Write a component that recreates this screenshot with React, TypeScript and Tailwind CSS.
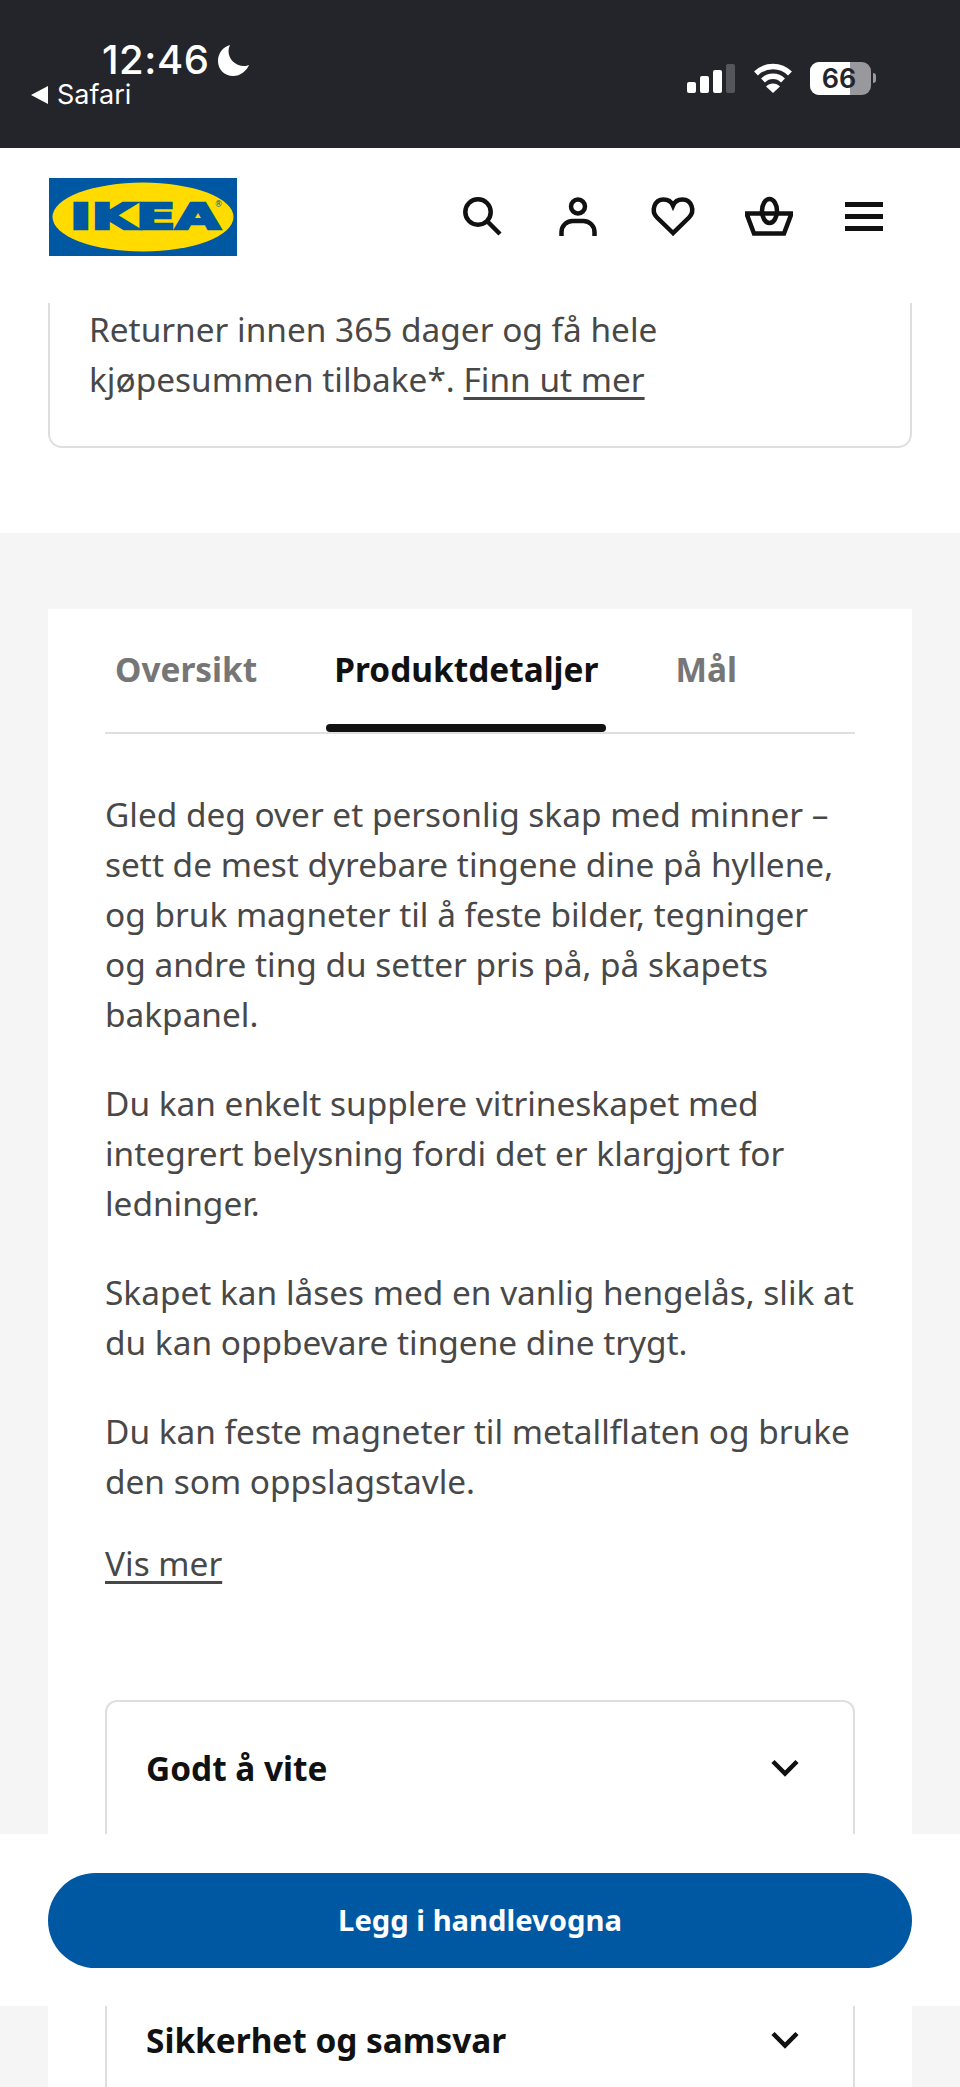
const bodyParagraphs = [
  "Gled deg over et personlig skap med minner – sett de mest dyrebare tingene dine på hyllene, og bruk magneter til å feste bilder, tegninger og andre ting du setter pris på, på skapets bakpanel.",
  "Du kan enkelt supplere vitrineskapet med integrert belysning fordi det er klargjort for ledninger.",
  "Skapet kan låses med en vanlig hengelås, slik at du kan oppbevare tingene dine trygt.",
  "Du kan feste magneter til metallflaten og bruke den som oppslagstavle.",
];

function StatusBar() {
  return (
    <div className="flex h-[148px] justify-between bg-[#24252b] pl-[31px] pr-[84px] pt-[40px] font-['Inter',sans-serif] text-white">
      <div>
        <div className="flex h-[40px] items-center pl-[71px]">
          <span className="text-[40px] font-medium leading-[40px] tracking-[0.5px]">12:46</span>
          <svg className="ml-[9px]" width="32" height="32" viewBox="0 0 32 32" fill="#fff">
            <path d="M12 1C5 3 0 9 0 17c0 8.500 6.500 15 15 15 7.500 0 13.500-5 16-11-1 .5-3 1-5 1-9 0-15.500-7-15.500-15 0-2 .5-4 1.500-6z" />
          </svg>
        </div>
        <div className="flex h-[30px] items-center">
          <svg width="18" height="18" viewBox="0 0 18 18" fill="#fff">
            <path d="M0 9 17 0v18z" />
          </svg>
          <span className="ml-[8px] text-[27px] leading-[30px]">Safari</span>
        </div>
      </div>
      <div className="flex h-[40px] items-center pt-[36px]">
        <div className="flex items-end gap-[4px]">
          <div className="h-[11px] w-[9px] rounded-[2px] bg-white" />
          <div className="h-[17px] w-[9px] rounded-[2px] bg-white" />
          <div className="h-[23px] w-[9px] rounded-[2px] bg-white" />
          <div className="h-[29px] w-[9px] rounded-[2px] bg-[#55565b]" />
        </div>
        <svg className="ml-[18px]" width="40" height="30" viewBox="0 0 40 30" fill="none" stroke="#fff">
          <path d="M3 10.500A24 24 0 0 1 37 10.500" strokeWidth="5.500" />
          <path d="M10 17.500A14 14 0 0 1 30 17.500" strokeWidth="5.500" />
          <path d="M20 30 13 23.500A9.500 9.500 0 0 1 27 23.500z" fill="#fff" stroke="none" />
        </svg>
        <div className="ml-[17px] flex h-[33px] w-[61px] overflow-hidden rounded-[9px] bg-[#98989d]">
          <div className="flex h-full w-[40px] bg-white" />
          <span className="-ml-[40px] w-[61px] pr-[3px] text-center text-[27px] font-semibold leading-[33px] text-[#24252b]">66</span>
        </div>
        <div className="ml-[2px] h-[10px] w-[3px] rounded-r-full bg-[#98989d]" />
      </div>
    </div>
  );
}

function IkeaLogo() {
  return (
    <svg width="188" height="78" viewBox="0 0 188 78">
      <rect width="188" height="78" fill="#0058a3" />
      <ellipse cx="94" cy="39" rx="90.500" ry="34.500" fill="#ffdb00" />
      <text
        x="21"
        y="51"
        fontFamily="'DejaVu Sans', sans-serif"
        fontWeight="700"
        fontSize="36"
        fill="#0058a3"
        stroke="#0058a3"
        strokeWidth="2.500"
        textLength="150"
        lengthAdjust="spacingAndGlyphs"
      >
        IKEA
      </text>
      <text x="165.500" y="29" fontFamily="'DejaVu Sans', sans-serif" fontSize="8" fill="#0058a3">®</text>
    </svg>
  );
}

function NavIcons() {
  return (
    <div className="mt-[14px] flex gap-[47.500px]">
      <svg width="48" height="48" viewBox="0 0 48 48" fill="none" stroke="#111" strokeWidth="4.500">
        <circle cx="20" cy="20" r="12.700" />
        <path d="M29 29 42 42" />
      </svg>
      <svg width="48" height="48" viewBox="0 0 48 48" fill="none" stroke="#111" strokeWidth="4.500">
        <circle cx="24" cy="14.500" r="7" />
        <path d="M7.500 44v-4a11 11 0 0 1 11-11h11a11 11 0 0 1 11 11v4" />
      </svg>
      <svg width="48" height="48" viewBox="0 0 48 48" fill="none" stroke="#111" strokeWidth="4.500">
        <path d="M24 41 8 25.500C1.500 19 5.500 7.500 14.500 7.500c4.500 0 8 2.500 9.500 6 1.500-3.500 5-6 9.500-6 9 0 13 11.500 6.500 18z" />
      </svg>
      <svg width="48" height="48" viewBox="0 0 48 48" fill="none" stroke="#111" strokeWidth="4.500">
        <path d="M1.500 21.500H46.500L39 41.500H9z" />
        <ellipse cx="24.500" cy="19" rx="7.500" ry="12" />
      </svg>
      <svg width="48" height="48" viewBox="0 0 48 48" fill="#111">
        <rect x="5" y="10" width="38" height="5" />
        <rect x="5" y="22" width="38" height="5" />
        <rect x="5" y="34" width="38" height="5" />
      </svg>
    </div>
  );
}

function Chevron() {
  return (
    <svg width="32" height="32" viewBox="0 0 32 32" fill="none" stroke="#111" strokeWidth="4.500">
      <path d="M4 9.500 16 21.500 28 9.500" />
    </svg>
  );
}

function AccordionRow({ title, className }: { title: string; className?: string }) {
  return (
    <div className={`flex h-[132px] items-center justify-between pl-[39px] pr-[52px] ${className ?? ""}`}>
      <span className="text-[33.400px] font-bold leading-[50px] text-[#111]">{title}</span>
      <Chevron />
    </div>
  );
}

export default function App() {
  return (
    <div className="relative h-[2087px] w-[960px] overflow-hidden bg-white font-['Noto_Sans',sans-serif] text-[33.400px] leading-[50px] text-[#484848]">
      <StatusBar />

      <div className="flex h-[155px] items-start justify-between pl-[49px] pr-[72px] pt-[30px]">
        <IkeaLogo />
        <NavIcons />
      </div>

      <div className="px-[48px] pb-[85px]">
        <div className="rounded-b-[14px] border-x-2 border-b-2 border-[#dfdfdf] px-[39px] pb-[42px] pt-[1px]">
          Returner innen 365 dager og få hele
          <br />
          kjøpesummen tilbake*. <span className="underline underline-offset-[5px]">Finn ut mer</span>
        </div>
      </div>

      <div className="bg-[#f5f5f5] px-[48px] pt-[76px]">
        <div className="bg-white px-[57px]">
          <div className="flex gap-[61px] border-b-2 border-[#dfdfdf] px-[2px] pt-[35px] font-bold">
            <div className="px-[8px] text-[#767676]">
              Oversikt
              <div className="mt-[30px] h-[8px]" />
            </div>
            <div className="px-[8px] text-[#111]">
              Produktdetaljer
              <div className="-mx-[8px] mt-[30px] h-[8px] rounded-full bg-[#111]" />
            </div>
            <div className="px-[8px] text-[#767676]">
              Mål
              <div className="mt-[30px] h-[8px]" />
            </div>
          </div>

          <div className="mt-[55px] flex flex-col gap-[39px]">
            {bodyParagraphs.map((text) => (
              <p key={text}>{text}</p>
            ))}
          </div>
          <div className="mt-[32px] underline underline-offset-[5px]">Vis mer</div>

          <div className="mt-[112px] rounded-t-[12px] border-x-2 border-t-2 border-[#dfdfdf]">
            <AccordionRow title="Godt å vite" />
            <AccordionRow title="Sikkerhet og samsvar" className="mt-[140px]" />
          </div>
        </div>
      </div>

      <div className="absolute inset-x-0 bottom-[81px] flex h-[172px] items-center bg-white px-[48px]">
        <div className="flex h-[95px] w-full items-center justify-center rounded-full bg-[#0058a3] text-[29.200px] font-bold text-white">
          Legg i handlevogna
        </div>
      </div>
    </div>
  );
}
